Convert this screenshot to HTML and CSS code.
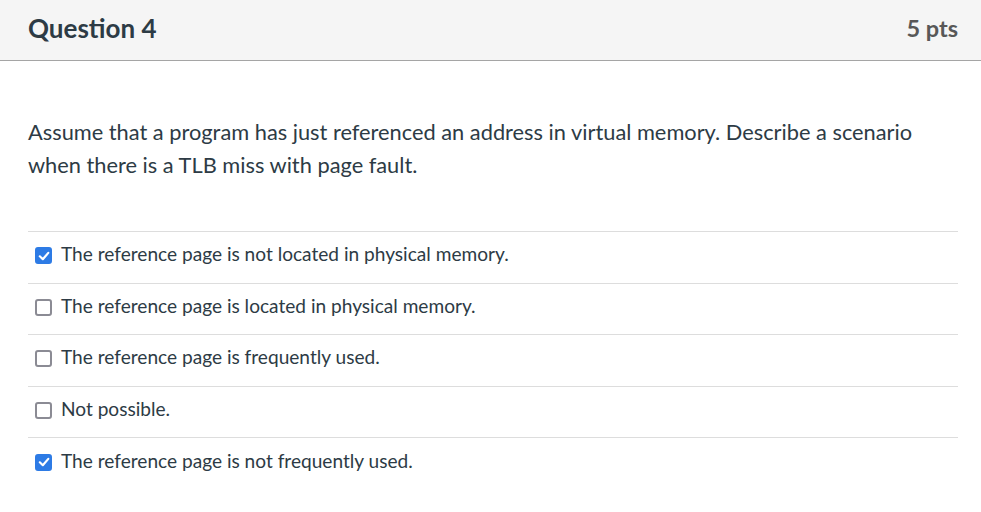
FILE: index.html
```html
<!DOCTYPE html>
<html>
<head>
<meta charset="utf-8">
<link rel="stylesheet" href="styles.css">
</head>
<body>
<div class="question">
  <div class="header">
    <h2 class="title">Question 4</h2>
    <div class="pts">5 pts</div>
  </div>
  <div class="content">
    <p class="text">Assume that a program has just referenced an address in virtual memory. Describe a scenario when there is a TLB miss with page fault.</p>
    <div class="answers">
      <div class="answer"><span class="box checked"><svg viewBox="0 0 16 16" width="16" height="16"><path d="M3.8 8.3 L6.8 11.2 L12.3 4.9" fill="none" stroke="#fff" stroke-width="2.2" stroke-linecap="round" stroke-linejoin="round"/></svg></span><span class="label">The reference page is not located in physical memory.</span></div>
      <div class="answer"><span class="box"></span><span class="label">The reference page is located in physical memory.</span></div>
      <div class="answer"><span class="box"></span><span class="label">The reference page is frequently used.</span></div>
      <div class="answer"><span class="box"></span><span class="label">Not possible.</span></div>
      <div class="answer"><span class="box checked"><svg viewBox="0 0 16 16" width="16" height="16"><path d="M3.8 8.3 L6.8 11.2 L12.3 4.9" fill="none" stroke="#fff" stroke-width="2.2" stroke-linecap="round" stroke-linejoin="round"/></svg></span><span class="label">The reference page is not frequently used.</span></div>
    </div>
  </div>
</div>
</body>
</html>
```
FILE: styles.css
```css
html, body { margin: 0; padding: 0; background: #fff; }
body { font-family: Lato, "Liberation Sans", sans-serif; color: #2d3b45; }
.header {
  display: flex; justify-content: space-between; align-items: center;
  background: #f5f5f5; border-bottom: 1px solid #a5a5a5;
  height: 61px; box-sizing: border-box; padding: 0 23px 4px 28px;
}
.title { margin: 0; font-size: 26px; font-weight: 700; color: #2d3b45; }
.pts { font-size: 23.5px; font-weight: 700; color: #585858; }
.content { padding: 0 23px 0 28px; }
.text { margin: 0; padding-top: 54px; font-size: 21.8px; line-height: 33px; }
.answers { margin-top: 50px; border-top: 1px solid #ddd; }
.answer {
  display: flex; align-items: center; height: 51.5px; box-sizing: border-box;
  border-bottom: 1px solid #ddd; padding-left: 7px; padding-bottom: 7px;
}
.answer:last-child { border-bottom: none; }
.box {
  width: 17px; height: 17px; box-sizing: border-box; border: 2px solid #8b8b94;
  border-radius: 3px; display: inline-flex; align-items: center; justify-content: center;
  margin-right: 9px; margin-top: 4px; flex: none;
}
.box.checked { background: #2d7be5; border-color: #2d7be5; }
.box svg { display: block; flex: none; }
.label { font-size: 19.1px; }
```
